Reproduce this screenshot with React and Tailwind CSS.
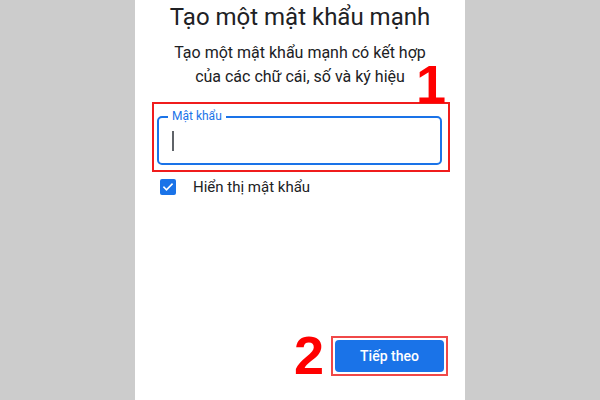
import React from 'react';

function App() {
    return (
        <div className="w-[600px] h-[400px] bg-[#cccccc] flex justify-center" style={{ fontFamily: 'Roboto, "Noto Sans", sans-serif' }}>
            <div className="w-[330px] h-full bg-white flex flex-col">
                {/* Heading */}
                <h1 className="mt-[1px] text-center text-[24px] leading-[32px] text-[#202124]">
                    Tạo một mật khẩu mạnh
                </h1>
                <p className="mt-[8px] text-center text-[16px] leading-[24px] text-[#202124]">
                    Tạo một mật khẩu mạnh có kết hợp
                    <br />
                    của các chữ cái, số và ký hiệu
                </p>

                {/* Password field with red highlight */}
                <div className="relative mt-[13px] ml-[17px] w-[298px] h-[70px] border-2 border-[#f01c1c] px-[3px] pt-[12px]">
                    <span
                        className="absolute right-[2px] -top-[47px] text-[54px] leading-none font-bold text-[#ff0000]"
                        style={{ fontFamily: '"Liberation Sans", Arial, sans-serif' }}
                    >
                        1
                    </span>
                    <div className="relative h-[49px] w-[285px] border-2 border-[#1a73e8] rounded-[5px]">
                        <span className="absolute -top-[10px] left-[9px] bg-white px-[4px] text-[12px] leading-[16px] text-[#1a73e8]">
                            Mật khẩu
                        </span>
                        <div className="absolute left-[13px] top-[13px] w-[2px] h-[20px] bg-[#5f6368]"></div>
                    </div>
                </div>

                {/* Show password */}
                <div className="mt-[5px] ml-[25px] flex items-center gap-[17px]">
                    <div className="w-[16px] h-[16px] rounded-[2px] bg-[#1a73e8] flex items-center justify-center">
                        <svg width="12" height="12" viewBox="0 0 24 24" fill="none" stroke="white" strokeWidth="3.2" strokeLinecap="square">
                            <path d="M4 12.5l5 5L20 6.5" />
                        </svg>
                    </div>
                    <span className="text-[15px] leading-[20px] text-[#202124]">Hiển thị mật khẩu</span>
                </div>

                {/* Next button */}
                <div className="mt-auto mb-[18px] mr-[17px] flex items-center justify-end gap-[7px]">
                    <span
                        className="text-[54px] leading-none font-bold text-[#ff0000] mt-[-2px]"
                        style={{ fontFamily: '"Liberation Sans", Arial, sans-serif' }}
                    >
                        2
                    </span>
                    <div className="border-2 border-[#f04848] p-[2px]">
                        <button className="w-[109px] h-[32px] rounded-[4px] bg-[#1a73e8] text-white text-[14px] font-medium">
                            Tiếp theo
                        </button>
                    </div>
                </div>
            </div>
        </div>
    );
}

export default App;
